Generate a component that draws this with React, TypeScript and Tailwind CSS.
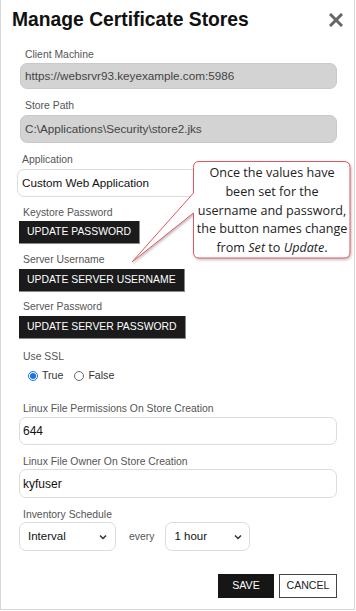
import { ReactNode } from 'react';

const Label = ({ children, className = '' }: { children: ReactNode; className?: string }) => (
  <div className={`text-[10.4px] leading-[14px] text-[#555] ${className}`}>{children}</div>
);

const DarkButton = ({ children, className = '' }: { children: ReactNode; className?: string }) => (
  <div className={`flex ${className}`}>
    <button
      type="button"
      className="h-[23px] bg-[#1b1b1b] text-white text-[10.4px] leading-[22px] px-[8px] border-b border-r border-[#888]"
    >
      {children}
    </button>
  </div>
);

const Chevron = () => (
  <svg width="8" height="6" viewBox="0 0 8 6" fill="none" stroke="#333" strokeWidth="1.5">
    <path d="M1 1.5l3 3 3-3" />
  </svg>
);

// Hinweis-Blase mit Zeiger auf die Buttons
const Callout = () => (
  <div className="absolute left-0 top-0 w-[356px] h-[270px] pointer-events-none">
    <svg width="356" height="270" className="absolute left-0 top-0">
      <defs>
        <filter id="sh" x="-10%" y="-10%" width="130%" height="130%">
          <feDropShadow dx="1" dy="1.5" stdDeviation="1.2" floodColor="#000" floodOpacity="0.25" />
        </filter>
      </defs>
      <path
        d="M198 161.5 H343 Q349 161.5 349 167.5 V252 Q349 258 343 258 H198 Q192.5 258 192.5 252 V213 L131 262 L192.5 193 V167.5 Q192.5 161.5 198 161.5 Z"
        fill="#fff"
        stroke="#e0555f"
        strokeWidth="1"
        filter="url(#sh)"
      />
    </svg>
    <div className="absolute left-[192px] top-[164px] w-[158px] text-center whitespace-nowrap text-[12.6px] leading-[18.8px] text-[#222] font-['Open_Sans',sans-serif]">
      Once the values have
      <br />
      been set for the
      <br />
      username and password,
      <br />
      the button names change
      <br />
      from <i>Set</i> to <i>Update</i>.
    </div>
  </div>
);

export default function App() {
  return (
    <div className="relative w-[355px] h-[610px] bg-white border-l border-r border-b border-[#d6d6d6] font-['Liberation_Sans',Arial,sans-serif] overflow-hidden">
      <div className="flex items-center justify-between pl-[11px] pr-[11px] pt-[5px] h-[34px]">
        <h1 className="text-[19.3px] font-bold text-[#111] leading-[26px]">Manage Certificate Stores</h1>
        <svg width="14" height="14" viewBox="0 0 14 14" stroke="#666" strokeWidth="3" strokeLinecap="square">
          <path d="M2 2l10 10M12 2L2 12" />
        </svg>
      </div>

      <div className="flex flex-col pl-[18px] pr-[17px]">
        <Label className="mt-[14px] pl-[6px]">Client Machine</Label>
        <div className="mt-[1px] ml-[1px] h-[26px] rounded-[7px] bg-[#d3d3d3] border border-[#c9c9c9] flex items-center pl-[4px] text-[11.7px] text-[#444]">
          https://websrvr93.keyexample.com:5986
        </div>

        <Label className="mt-[10px] pl-[6px]">Store Path</Label>
        <div className="mt-[2px] ml-[1px] h-[28px] rounded-[7px] bg-[#d3d3d3] border border-[#c9c9c9] flex items-center pl-[4px] text-[11.7px] text-[#444]">
          C:\Applications\Security\store2.jks
        </div>

        <Label className="mt-[10px] pl-[3px]">Application</Label>
        <div className="mt-[2px] -ml-[2px] h-[28px] rounded-[7px] bg-white border border-[#dcdcdc] flex items-center pl-[4px] text-[11.7px] text-[#111]">
          Custom Web Application
        </div>

        <Label className="mt-[9px] pl-[4px]">Keystore Password</Label>
        <DarkButton className="mt-[1px]">UPDATE PASSWORD</DarkButton>

        <Label className="mt-[9px] pl-[4px]">Server Username</Label>
        <DarkButton className="mt-[2px]">UPDATE SERVER USERNAME</DarkButton>

        <Label className="mt-[8px] pl-[4px]">Server Password</Label>
        <DarkButton className="mt-[2px]">UPDATE SERVER PASSWORD</DarkButton>

        <Label className="mt-[11px] pl-[4px]">Use SSL</Label>
        <div className="mt-[3px] h-[18px] flex items-center pl-[9px] text-[10.6px] text-[#333] gap-[4px]">
          <span className="w-[10px] h-[10px] rounded-full border border-[#1a73e8] flex items-center justify-center">
            <span className="w-[6px] h-[6px] rounded-full bg-[#1a73e8]" />
          </span>
          <span>True</span>
          <span className="ml-[7px] w-[10px] h-[10px] rounded-full border border-[#666]" />
          <span>False</span>
        </div>

        <Label className="mt-[17px] pl-[4px]">Linux File Permissions On Store Creation</Label>
        <div className="mt-[1px] h-[28px] rounded-[7px] bg-white border border-[#dcdcdc] flex items-center pl-[3px] text-[12px] text-[#111]">
          644
        </div>

        <Label className="mt-[10px] pl-[4px]">Linux File Owner On Store Creation</Label>
        <div className="mt-[0px] h-[29px] rounded-[7px] bg-white border border-[#dcdcdc] flex items-center pl-[3px] text-[12px] text-[#111]">
          kyfuser
        </div>

        <Label className="mt-[10px] pl-[4px]">Inventory Schedule</Label>
        <div className="mt-[0px] flex items-center">
          <div className="w-[97px] h-[29px] rounded-[7px] bg-white border border-[#dcdcdc] flex items-center justify-between pl-[8px] pr-[8px] text-[11.5px] text-[#111]">
            <span>Interval</span>
            <Chevron />
          </div>
          <span className="ml-[13px] text-[10.4px] text-[#555]">every</span>
          <div className="ml-[11px] w-[85px] h-[29px] rounded-[7px] bg-white border border-[#dcdcdc] flex items-center justify-between pl-[8px] pr-[7px] text-[11.5px] text-[#111]">
            <span>1 hour</span>
            <Chevron />
          </div>
        </div>

        <div className="mt-[23px] flex justify-end gap-[5px] pr-[0px]">
          <button type="button" className="w-[56px] h-[24px] bg-[#161616] text-white text-[10.6px]">SAVE</button>
          <button type="button" className="w-[58px] h-[24px] bg-white border border-[#444] text-[#222] text-[10.6px]">CANCEL</button>
        </div>
      </div>

      <Callout />
    </div>
  );
}
